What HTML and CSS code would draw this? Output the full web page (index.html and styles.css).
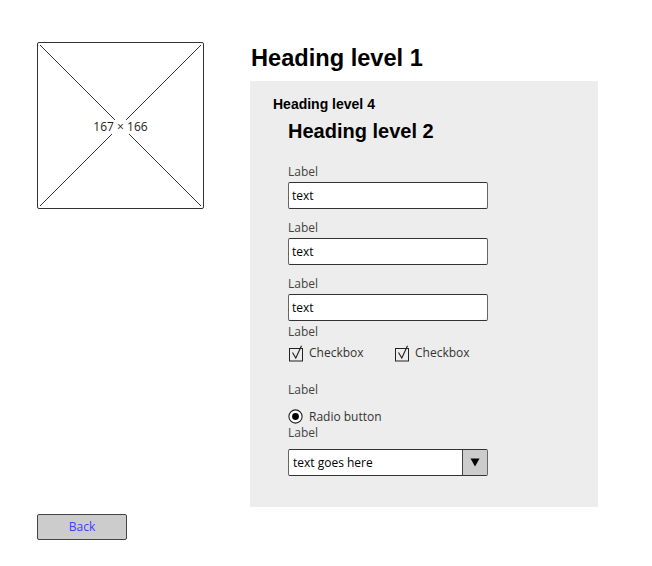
FILE: index.html
```html
<!DOCTYPE html>
<html>
<head>
<meta charset="utf-8">
<link rel="stylesheet" href="styles.css">
</head>
<body>
<div class="page">
  <div class="left">
    <div class="placeholder">
      <svg class="ph-lines" width="167" height="167" viewBox="0 0 167 167">
        <line x1="3" y1="3" x2="164" y2="164" stroke="#000" stroke-width="0.8"/>
        <line x1="164" y1="3" x2="3" y2="164" stroke="#000" stroke-width="0.8"/>
      </svg>
      <span class="ph-label">167 × 166</span>
    </div>
    <button class="back">Back</button>
  </div>
  <div class="right">
    <h1 class="h1">Heading level 1</h1>
    <div class="panel">
      <h4 class="h4">Heading level 4</h4>
      <div class="content">
        <h2 class="h2">Heading level 2</h2>
        <div class="form">
          <div class="label">Label</div>
          <div class="input">text</div>
          <div class="label gap">Label</div>
          <div class="input">text</div>
          <div class="label gap">Label</div>
          <div class="input">text</div>
          <div class="label tight">Label</div>
          <div class="checks">
            <span class="check">
              <svg width="16" height="17" viewBox="0 0 16 17"><rect x="0.5" y="3.5" width="13" height="12.5" fill="none" stroke="#222" stroke-width="1"/><path d="M3.5 7.5 L6.8 13 L12.5 0.8" fill="none" stroke="#222" stroke-width="1.1"/></svg>
              Checkbox
            </span>
            <span class="check">
              <svg width="16" height="17" viewBox="0 0 16 17"><rect x="0.5" y="3.5" width="13" height="12.5" fill="none" stroke="#222" stroke-width="1"/><path d="M3.5 7.5 L6.8 13 L12.5 0.8" fill="none" stroke="#222" stroke-width="1.1"/></svg>
              Checkbox
            </span>
          </div>
          <div class="label label-radio">Label</div>
          <div class="radio-row">
            <svg width="16" height="16" viewBox="0 0 16 16"><circle cx="7.5" cy="7.5" r="6.6" fill="#fff" stroke="#222" stroke-width="1.1"/><circle cx="7.5" cy="7.5" r="3.4" fill="#000"/></svg>
            Radio button
          </div>
          <div class="label">Label</div>
          <div class="select">
            <span class="select-text">text goes here</span>
            <span class="select-btn"><svg width="10" height="9" viewBox="0 0 10 9"><path d="M0.5 0.5 H9.5 L5 8.5 Z" fill="#000"/></svg></span>
          </div>
        </div>
      </div>
    </div>
  </div>
</div>
</body>
</html>
```
FILE: styles.css
```css
html, body {
  margin: 0;
  padding: 0;
  background: #fff;
}
body {
  font-family: "Open Sans", "DejaVu Sans", sans-serif;
  color: #222;
}
.page {
  display: flex;
  padding: 42px 0 0 37px;
}
.left {
  display: flex;
  flex-direction: column;
  width: 167px;
}
.placeholder {
  display: grid;
  width: 167px;
  height: 167px;
  box-sizing: border-box;
  border: 1px solid #333;
  border-radius: 2px;
}
.ph-lines {
  grid-area: 1 / 1;
  margin: -1px;
}
.ph-label {
  grid-area: 1 / 1;
  align-self: center;
  justify-self: center;
  font-size: 12px;
  line-height: 14px;
  background: #fff;
  padding: 0 1px;
  color: #222;
  margin-top: 2px;
}
.back {
  margin-top: 305px;
  width: 90px;
  height: 26px;
  box-sizing: border-box;
  background: #cccccc;
  border: 1px solid #444;
  border-radius: 2px;
  color: #3d3dff;
  font-family: "Open Sans", sans-serif;
  font-size: 12px;
  padding: 0;
  line-height: 24px;
}
.right {
  margin-left: 46px;
  width: 348px;
}
.h1 {
  margin: 2px 0 0 1px;
  font-family: "Liberation Sans", Arial, sans-serif;
  font-size: 23.6px;
  line-height: 28px;
  font-weight: bold;
  color: #000;
}
.panel {
  margin-top: 9px;
  background: #ededed;
  padding: 15px 0 31px 23px;
}
.h4 {
  margin: 0;
  font-family: "Liberation Sans", Arial, sans-serif;
  font-size: 14px;
  line-height: 16px;
  font-weight: bold;
  color: #000;
}
.content {
  padding-left: 15px;
}
.h2 {
  margin: 7px 0 0 0;
  font-family: "Liberation Sans", Arial, sans-serif;
  font-size: 20px;
  line-height: 24px;
  font-weight: bold;
  color: #000;
}
.form {
  margin-top: 21px;
  display: flex;
  flex-direction: column;
  align-items: flex-start;
}
.label {
  font-size: 12px;
  line-height: 15px;
  color: #444;
}
.label.gap {
  margin-top: 11px;
}
.label.tight {
  margin-top: 3px;
}
.input {
  margin-top: 3px;
  width: 200px;
  height: 27px;
  box-sizing: border-box;
  background: #fff;
  border: 1px solid #333;
  border-left-color: #666;
  border-right-color: #666;
  border-radius: 2px;
  font-size: 12px;
  line-height: 25px;
  padding-left: 3px;
  color: #000;
}
.checks {
  margin-top: 6px;
  display: flex;
  gap: 0;
}
.check {
  display: flex;
  align-items: flex-end;
  gap: 4px;
  font-size: 12px;
  line-height: 16px;
  color: #333;
  width: 106px;
}
.check svg {
  flex: none;
  margin-bottom: -1px;
  margin-left: 1px;
}
.label-radio {
  margin-top: 21px;
}
.radio-row {
  margin-top: 12px;
  display: flex;
  align-items: center;
  gap: 5px;
  font-size: 12px;
  line-height: 16px;
  color: #333;
}
.select {
  margin-top: 9px;
  width: 200px;
  height: 27px;
  box-sizing: border-box;
  background: #fff;
  border: 1px solid #333;
  border-left-color: #666;
  border-right-color: #666;
  border-radius: 2px;
  display: flex;
}
.select-text {
  flex: 1;
  font-size: 12px;
  line-height: 25px;
  padding-left: 4px;
  color: #000;
}
.select-btn {
  width: 24px;
  background: #cccccc;
  border-left: 1px solid #444;
  display: flex;
  align-items: center;
  justify-content: center;
}
```
